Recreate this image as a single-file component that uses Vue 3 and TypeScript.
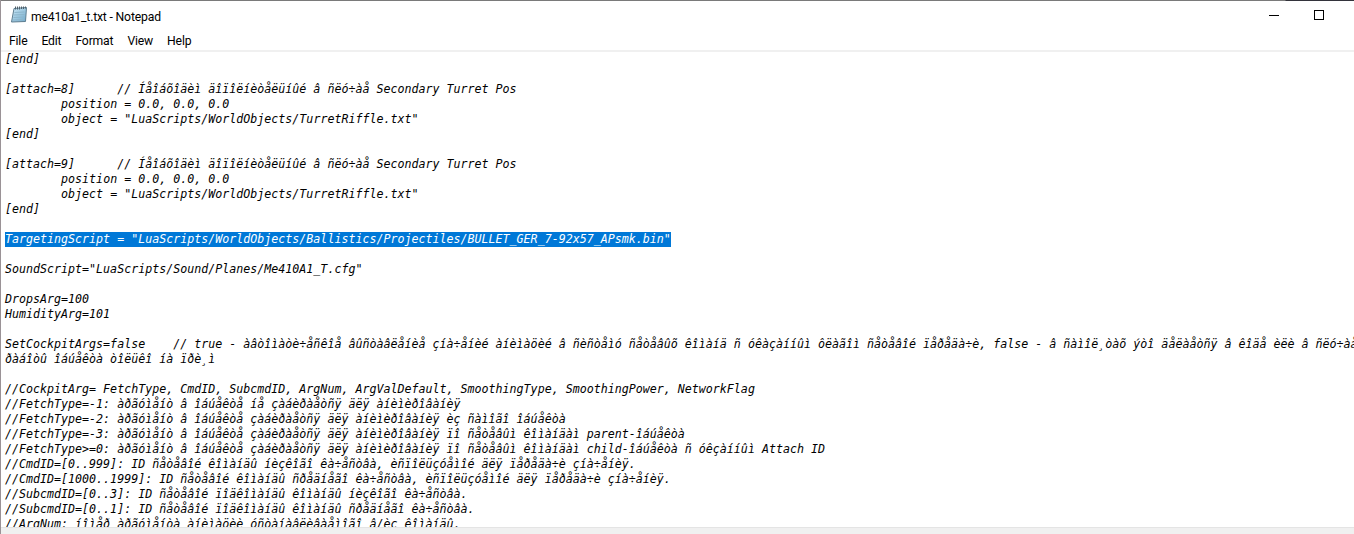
<script setup lang="ts">
interface Line { text: string; sel?: boolean }
const raw: string[] = [
  '[end]',
  '',
  '[attach=8]\t// Íåîáõîäèì äîïîëíèòåëüíûé â ñëó÷àå Secondary Turret Pos',
  '\tposition = 0.0, 0.0, 0.0',
  '\tobject = "LuaScripts/WorldObjects/TurretRiffle.txt"',
  '[end]',
  '',
  '[attach=9]\t// Íåîáõîäèì äîïîëíèòåëüíûé â ñëó÷àå Secondary Turret Pos',
  '\tposition = 0.0, 0.0, 0.0',
  '\tobject = "LuaScripts/WorldObjects/TurretRiffle.txt"',
  '[end]',
  '',
  'TargetingScript = "LuaScripts/WorldObjects/Ballistics/Projectiles/BULLET_GER_7-92x57_APsmk.bin"',
  '',
  'SoundScript="LuaScripts/Sound/Planes/Me410A1_T.cfg"',
  '',
  'DropsArg=100',
  'HumidityArg=101',
  '',
  'SetCockpitArgs=false\t// true - àâòîìàòè÷åñêîå âûñòàâëåíèå çíà÷åíèé àíèìàöèé â ñèñòåìó ñåòåâûõ êîìàíä ñ óêàçàííûì ôëàãîì ñåòåâîé ïåðåäà÷è, false - â ñàìîë¸òàõ ýòî äåëàåòñÿ â êîäå èëè â ñëó÷àå',
  'ðàáîòû îáúåêòà òîëüêî íà ïðè¸ì',
  '',
  '//CockpitArg= FetchType, CmdID, SubcmdID, ArgNum, ArgValDefault, SmoothingType, SmoothingPower, NetworkFlag',
  '//FetchType=-1: àðãóìåíò â îáúåêòå íå çàáèðàåòñÿ äëÿ àíèìèðîâàíèÿ',
  '//FetchType=-2: àðãóìåíò â îáúåêòå çàáèðàåòñÿ äëÿ àíèìèðîâàíèÿ èç ñàìîãî îáúåêòà',
  '//FetchType=-3: àðãóìåíò â îáúåêòå çàáèðàåòñÿ äëÿ àíèìèðîâàíèÿ ïî ñåòåâûì êîìàíäàì parent-îáúåêòà',
  '//FetchType>=0: àðãóìåíò â îáúåêòå çàáèðàåòñÿ äëÿ àíèìèðîâàíèÿ ïî ñåòåâûì êîìàíäàì child-îáúåêòà ñ óêçàííûì Attach ID',
  '//CmdID=[0..999]: ID ñåòåâîé êîìàíäû íèçêîãî êà÷åñòâà, èñïîëüçóåìîé äëÿ ïåðåäà÷è çíà÷åíèÿ.',
  '//CmdID=[1000..1999]: ID ñåòåâîé êîìàíäû ñðåäíåãî êà÷åñòâà, èñïîëüçóåìîé äëÿ ïåðåäà÷è çíà÷åíèÿ.',
  '//SubcmdID=[0..3]: ID ñåòåâîé ïîäêîìàíäû êîìàíäû íèçêîãî êà÷åñòâà.',
  '//SubcmdID=[0..1]: ID ñåòåâîé ïîäêîìàíäû êîìàíäû ñðåäíåãî êà÷åñòâà.',
  '//ArgNum: íîìåð àðãóìåíòà àíèìàöèè óñòàíàâëèâàåìîãî â/èç êîìàíäû.',
]
const lines: Line[] = raw.map((text, i) => ({ text, sel: i === 12 }))
const menus: string[] = ['File', 'Edit', 'Format', 'View', 'Help']
</script>

<template>
  <div class="window">
    <div class="topline"></div>
    <div class="titlebar">
      <svg class="appicon" width="16" height="17" viewBox="0 0 16 17">
        <defs>
          <linearGradient id="pad" x1="0" y1="0" x2="1" y2="1">
            <stop offset="0" stop-color="#cfeaf7" />
            <stop offset="1" stop-color="#6fa9cb" />
          </linearGradient>
        </defs>
        <path d="M3 2.5 L15.5 1.5 L14.5 15.5 L0.5 16 Z" fill="url(#pad)" stroke="#5d7d90" stroke-width="1" />
        <path d="M3.5 6.5L13.5 6M3 9L13.5 8.5M2.5 11.5L13 11M2 14L13 13.5" stroke="#8db6cc" stroke-width="1" />
        <path d="M4.5 0.5V3.5M6.5 0.5V3.5M8.5 0.5V3.5M10.5 0.5V3M12.5 0.5V3M14.5 0.5V2.5" stroke="#4f5f69" stroke-width="1" />
      </svg>
      <span class="title">me410a1_t.txt - Notepad</span>
      <div class="controls">
        <span class="minimize"></span>
        <span class="maximize"></span>
      </div>
    </div>
    <div class="menubar">
      <span v-for="m in menus" :key="m" class="menu">{{ m }}</span>
    </div>
    <div class="editor">
      <div v-for="(l, i) in lines" :key="i" class="line"><span :class="{ sel: l.sel }">{{ l.text }}</span></div>
    </div>
    <div class="status"></div>
  </div>
</template>

<style>
html, body { margin: 0; background: #fff; overflow: hidden; }
</style>

<style scoped>
.window {
  width: 1354px;
  height: 534px;
  display: flex;
  flex-direction: column;
  background: #fff;
  overflow: hidden;
  border-left: 1px solid #9a9296;
  box-sizing: border-box;
}
.topline {
  height: 1px;
  flex: none;
  background: linear-gradient(to right, #7a7a7a 0, #7a7a7a 1284px, #33333b 1285px, #33333b 100%);
}
.titlebar {
  height: 30px;
  flex: none;
  display: flex;
  align-items: center;
  padding-left: 10px;
  font: 12.2px Roboto, sans-serif;
  letter-spacing: -0.17px;
  color: #000;
}
.appicon { flex: none; margin: 0 4px 3px 0; }
.title { padding-top: 1px; }
.controls {
  margin-left: auto;
  margin-bottom: 2px;
  display: flex;
  align-items: center;
  padding-right: 30px;
  gap: 35px;
}
.minimize { width: 10px; height: 1px; background: #000; }
.maximize { width: 8px; height: 8px; border: 1px solid #000; }
.menubar {
  height: 19px;
  flex: none;
  display: flex;
  align-items: center;
  gap: 14px;
  padding-left: 8px;
  font: 12.2px Roboto, sans-serif;
  letter-spacing: -0.17px;
  color: #000;
  border-bottom: 2px solid #f0f0f0;
}
.editor {
  flex: 1;
  min-height: 0;
  overflow: hidden;
  padding-left: 4px;
  font-family: "DejaVu Sans Mono", monospace;
  font-style: italic;
  font-size: 11.65px;
  line-height: 15px;
  color: #000;
}
.line {
  height: 15px;
  white-space: pre;
  tab-size: 8;
}
.sel { background: #0078d7; color: #fff; display: inline-block; }
.status {
  height: 7px;
  flex: none;
  box-sizing: border-box;
  background: #f0f0f0;
  border-top: 1px solid #e4e4e4;
}
</style>
